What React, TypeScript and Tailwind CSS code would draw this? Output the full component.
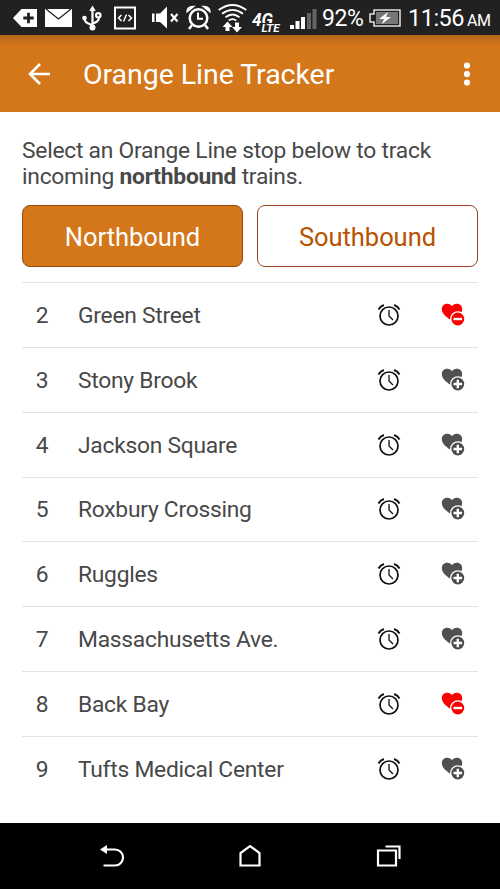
import { useState } from "react";

type Stop = { id: number; name: string; favorite: boolean };

const STOPS: Stop[] = [
  { id: 2, name: "Green Street", favorite: true },
  { id: 3, name: "Stony Brook", favorite: false },
  { id: 4, name: "Jackson Square", favorite: false },
  { id: 5, name: "Roxbury Crossing", favorite: false },
  { id: 6, name: "Ruggles", favorite: false },
  { id: 7, name: "Massachusetts Ave.", favorite: false },
  { id: 8, name: "Back Bay", favorite: true },
  { id: 9, name: "Tufts Medical Center", favorite: false },
];

function StatusBar() {
  return (
    <div className="flex h-[35px] shrink-0 items-center bg-[#212121] pl-[13px] text-white">
      <svg width="24" height="34" viewBox="0 0 24 34" fill="#fff">
        <path d="M0 17 8.500 8H24V26H8.500Z" />
        <path d="M15.500 11.800v10.400M10.300 17h10.400" stroke="#212121" strokeWidth="2.800" />
      </svg>
      <svg className="ml-2" width="27" height="34" viewBox="0 0 27 34">
        <path d="M0 8H27V26H0Z" fill="#fff" />
        <path d="M1 8 13.500 18 26 8" fill="none" stroke="#212121" strokeWidth="1.300" />
      </svg>
      <svg className="ml-[10px]" width="20" height="34" viewBox="0 0 20 34" fill="none" stroke="#fff" strokeWidth="2.200">
        <path d="M10.500 8v17M2.500 17v1q0 4 8 6M17 16q0 5-6.500 6.500" />
        <path d="M7.200 10 10.500 4.500l3.300 5.500Z" fill="#fff" stroke="none" />
        <circle cx="2.500" cy="17" r="2.300" fill="#fff" stroke="none" />
        <circle cx="16.300" cy="14.300" r="2.200" />
        <circle cx="10.500" cy="26.500" r="3" fill="#fff" stroke="none" />
      </svg>
      <svg className="ml-3" width="22" height="34" viewBox="0 0 22 34" fill="none" stroke="#fff">
        <path d="M1 6.500H21V27.500H1Z" strokeWidth="2" />
        <path d="m7.500 14-3 3 3 3m7-6 3 3-3 3m-2-6.500-3 7" strokeWidth="1.500" />
      </svg>
      <svg className="ml-4" width="27" height="34" viewBox="0 0 27 34" fill="#fff">
        <path d="M0 12.500h2.500v8.500H0ZM4 12.500h4l7-7v22L8 21H4Z" />
        <path d="m19 13 6.500 7.500m0-7.500L19 20.500" stroke="#fff" strokeWidth="2.200" />
      </svg>
      <svg className="ml-[7px]" width="25" height="34" viewBox="0 0 25 34" fill="none" stroke="#fff">
        <circle cx="12.500" cy="17" r="8.800" strokeWidth="2.500" />
        <path d="M12 11.500v6.200h5" strokeWidth="2" />
        <path d="M1 10.500q0-5 7-5L1 11Zm23 0q0-5-7-5L24 11Z" fill="#fff" strokeWidth="1.300" />
        <path d="m6 24-3 4m16-4 3 4" strokeWidth="2.500" />
      </svg>
      <svg className="ml-[7px]" width="29" height="34" viewBox="0 0 29 34" fill="none" stroke="#fff" strokeWidth="1.900">
        <path d="M.7 9q13.800-10 27.600 0M4 12.800q10.500-7.800 21 0M7.500 16.300q7-5.500 14 0M10.800 19.500q3.700-2.800 7.400 0" />
        <path d="m9.500 20.500-5 5.500h3v4h4v-4h3Zm9.500 11 5-5.500h-3v-4.500h-4v4.500h-3Z" fill="#fff" stroke="none" />
      </svg>
      <svg className="ml-[5px]" width="30" height="34" viewBox="0 0 30 34" fill="#fff" fontFamily="Roboto, sans-serif" fontWeight="700" fontStyle="italic">
        <text x="0" y="24.500" fontSize="19" textLength="21" lengthAdjust="spacingAndGlyphs">4G</text>
        <text x="9.500" y="31" fontSize="10" textLength="18" lengthAdjust="spacingAndGlyphs" stroke="#212121" strokeWidth="2" paintOrder="stroke">LTE</text>
      </svg>
      <svg className="ml-2" width="27" height="34" viewBox="0 0 27 34">
        <path d="M0 24h4v4H0ZM5.500 20h4v8h-4ZM11 16h4v12h-4Z" fill="#fff" />
        <path d="M17 12h4v16h-4ZM22.500 8h4v20h-4Z" fill="#646464" />
      </svg>
      <span className="ml-[5px] w-[43px] whitespace-nowrap pt-[2px] text-[23px] leading-[35px] tracking-[-0.4px]">92%</span>
      <svg className="ml-1" width="32" height="34" viewBox="0 0 32 34">
        <path d="M5 9H31V25H5V21H1V13H5Z" fill="#212121" stroke="#ddd" strokeWidth="1.600" />
        <path d="M7 11H29V23H7Z" fill="#777" />
        <path d="m19 11-9 7h5l-2 5 9-7h-5Z" fill="#fff" />
      </svg>
      <span className="ml-[7px] w-[55px] whitespace-nowrap pt-[2px] text-[23.5px] leading-[35px] tracking-[-0.5px]">11:56</span>
      <span className="ml-1 pt-[7px] text-[16px] leading-[30px] tracking-[-0.4px]">AM</span>
    </div>
  );
}

function AlarmIcon() {
  return (
    <svg width="24" height="26" viewBox="0 0 24 26" fill="none" stroke="#101010">
      <circle cx="12" cy="14" r="9" strokeWidth="1.700" />
      <path d="M12 8v6l4 4" strokeWidth="1.300" />
      <path d="M1.500 7.500q1.700-3.200 5.400-4.500M22.500 7.500q-1.700-3.200-5.400-4.500" strokeWidth="2" />
    </svg>
  );
}

function FavoriteIcon({ active }: { active: boolean }) {
  return (
    <svg width="24" height="26" viewBox="0 0 24 26">
      <path
        d="M11 19C7 16 .8 12.500.8 7 .8 1 9 0 11 4.200 13 0 21.200 1 21.200 7 21.200 12.500 15 16 11 19Z"
        fill={active ? "#fb0000" : "#505050"}
      />
      <circle cx="16.800" cy="17" r="7.800" fill="#fff" />
      <circle cx="16.800" cy="17" r="6.400" fill={active ? "#fb0000" : "#4b4b4b"} />
      <path d={active ? "M12.500 17h8.600" : "M12.500 17h8.600M16.800 12.700v8.600"} stroke="#fff" strokeWidth="2.400" />
    </svg>
  );
}

export default function App() {
  const [direction, setDirection] = useState("northbound");
  const [stops, setStops] = useState(STOPS);

  const toggleFavorite = (id: number) => {
    setStops(stops.map((s) => (s.id === id ? { ...s, favorite: !s.favorite } : s)));
  };

  const tabClass = (active: boolean) =>
    `h-[62px] flex-1 rounded-[8px] border pt-[3px] text-[25.5px] tracking-[-0.05px] ${
      active ? "border-[#9b4613] bg-[#d4771b] text-white" : "border-[#9b4620] bg-white text-[#b75300]"
    }`;

  return (
    <div className="flex h-[889px] w-[500px] flex-col overflow-hidden bg-white font-['Roboto',sans-serif] text-[#484848]">
      <StatusBar />

      <header className="flex h-[77px] shrink-0 items-center bg-linear-to-b from-[#b76517] to-[#d4771b] to-15% pl-[27px] text-white">
        <button aria-label="Back">
          <svg width="24" height="24" viewBox="0 0 24 24" fill="none" stroke="#fff" strokeWidth="2.600">
            <path d="M23 12H3M13 2 3 12l10 10" />
          </svg>
        </button>
        <h1 className="ml-8 flex-1 pt-1 text-[28.5px] tracking-[-0.05px]">Orange Line Tracker</h1>
        <button aria-label="More" className="mr-[29px]">
          <svg width="8" height="26" viewBox="0 0 8 26" fill="#fff">
            <circle cx="4" cy="4.500" r="3.100" />
            <circle cx="4" cy="13" r="3.100" />
            <circle cx="4" cy="21.500" r="3.100" />
          </svg>
        </button>
      </header>

      <main className="flex-1 px-[22px] pt-[26px]">
        <p className="whitespace-nowrap text-[22.8px] leading-[26px] tracking-[-0.24px]">
          Select an Orange Line stop below to track
          <br />
          incoming <b>northbound</b> trains.
        </p>

        <div className="mt-[15px] flex gap-[14px]">
          <button onClick={() => setDirection("northbound")} className={tabClass(direction === "northbound")}>
            Northbound
          </button>
          <button onClick={() => setDirection("southbound")} className={tabClass(direction === "southbound")}>
            Southbound
          </button>
        </div>

        <ul className="mt-[15px]">
          {stops.map((stop) => (
            <li
              key={stop.id}
              className="flex h-[64.85px] items-center border-t border-[#e4e4e4] text-[22.8px] tracking-[-0.25px]"
            >
              <span className="w-10 pt-[2px] text-center">{stop.id}</span>
              <span className="ml-4 flex-1 pt-[2px]">{stop.name}</span>
              <AlarmIcon />
              <button aria-label="Favorite" className="mr-[13px] ml-10" onClick={() => toggleFavorite(stop.id)}>
                <FavoriteIcon active={stop.favorite} />
              </button>
            </li>
          ))}
        </ul>
      </main>

      <nav className="flex h-[66px] shrink-0 items-center bg-black pl-[99px]">
        <svg width="26" height="26" viewBox="0 0 26 26" fill="none" stroke="#fff" strokeWidth="2.200">
          <path d="M6 6.500h10a8 8 0 0 1 0 16H4.500" />
          <path d="M1 6.500 8 2v9Z" fill="#fff" stroke="none" />
        </svg>
        <svg className="ml-[114px]" width="22" height="26" viewBox="0 0 22 26" fill="none" stroke="#fff" strokeWidth="2.200">
          <path d="M1.500 22.500v-12.500L11 3l9.500 7v12.500Z" />
        </svg>
        <svg className="ml-[115px]" width="26" height="26" viewBox="0 0 26 26" fill="none" stroke="#fff" strokeWidth="2.200">
          <path d="M2 7.500h18v15H2ZM9.500 3.500H23.500V16" />
        </svg>
      </nav>
    </div>
  );
}
